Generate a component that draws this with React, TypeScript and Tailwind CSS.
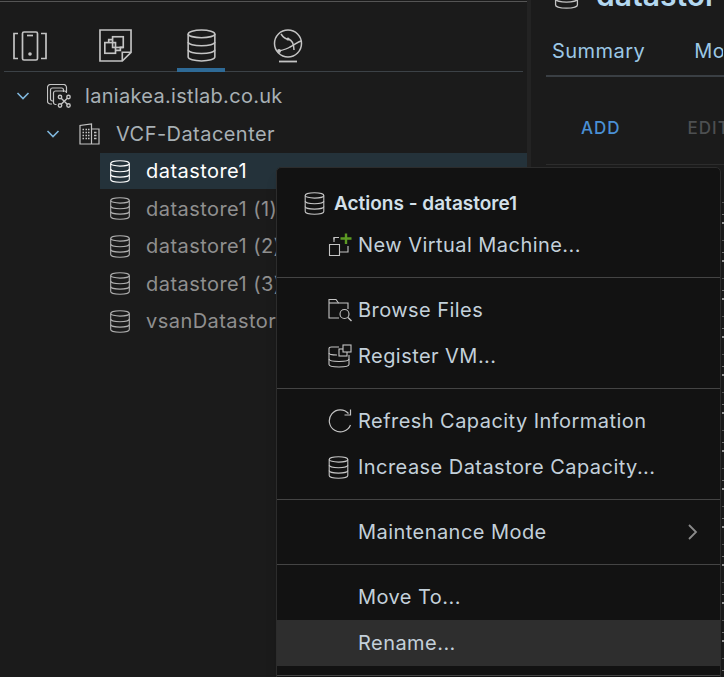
import type { ReactNode } from "react";

const ink = "#c4c4c4";

function Db({ className = "", color = ink }: { className?: string; color?: string }) {
  return (
    <svg viewBox="0 0 20 23" className={className} fill="none" stroke={color} strokeWidth="1.100">
      <ellipse cx="10" cy="3.400" rx="9.300" ry="2.700" />
      <path d="M0.700 3.400v16.200c0 1.500 4.200 2.700 9.300 2.700s9.300-1.200 9.300-2.700V3.400" />
      <path d="M0.700 9c0 1.500 4.200 2.700 9.300 2.700s9.300-1.200 9.300-2.700" />
      <path d="M0.700 14.400c0 1.500 4.200 2.700 9.300 2.700s9.300-1.200 9.300-2.700" />
    </svg>
  );
}

function HostsTabIcon() {
  return (
    <svg viewBox="0 0 34 30" className="h-[30px] w-[34px]" fill="none" stroke={ink} strokeWidth="1.700">
      <path d="M5 2.500H1v25h4M28 2.500h5v25h-5" />
      <rect x="9.500" y="1" width="15" height="28" rx="1.500" />
      <path d="M14 4.500h6" />
      <circle cx="17" cy="23" r="1.800" fill={ink} stroke="none" />
    </svg>
  );
}

function VmsTabIcon() {
  return (
    <svg viewBox="0 0 34 34" className="h-[33px] w-[33px]" fill="none" stroke={ink} strokeWidth="1.700">
      <path d="M1 1h32v23l-9 9H1z" />
      <path d="M33 24h-9v9" />
      <rect x="6" y="14" width="11" height="11" />
      <rect x="14" y="8" width="11" height="11" />
      <path d="M10 14V11h4M25 19h-3v3h-5" />
    </svg>
  );
}

function NetTabIcon() {
  return (
    <svg viewBox="0 0 30 34" className="h-[34px] w-[30px]" fill="none" stroke={ink} strokeWidth="1.500">
      <circle cx="15" cy="14.500" r="13.500" />
      <path d="M6 22c4-1 8-2 11-4 4-2 8-5 11-6" />
      <path d="M8 5c2 3 4 5 7 5 4 1 6 4 6 11" />
      <circle cx="6" cy="22" r="2" fill={ink} stroke="none" />
      <circle cx="15" cy="10" r="1.600" fill={ink} stroke="none" />
      <path d="M6 32.500h18" strokeWidth="1.800" />
    </svg>
  );
}

function VcenterIcon() {
  return (
    <svg viewBox="0 0 24 24" className="h-6 w-6" fill="none" stroke={ink} strokeWidth="1.200">
      <path d="M5 20H3.500a3 3 0 0 1-3-3V3.500a3 3 0 0 1 3-3h13a3 3 0 0 1 3 3V8" />
      <path d="M6 17H5.500a2 2 0 0 1-2-2V6a2 2 0 0 1 2-2h9a2 2 0 0 1 2 2v2" />
      <path d="M9.500 20.500H8.500a2 2 0 0 1-2-2V9a2 2 0 0 1 2-2h9a2 2 0 0 1 2 2" />
      <g strokeWidth="1.400">
        <circle cx="13" cy="13" r="1.700" />
        <circle cx="21.500" cy="13" r="1.700" />
        <circle cx="13" cy="21.500" r="1.700" />
        <circle cx="21.500" cy="21.500" r="1.700" />
        <path d="M14.200 14.200l6.100 6.100M20.300 14.200l-6.100 6.100" />
      </g>
    </svg>
  );
}

function DatacenterIcon() {
  return (
    <svg viewBox="0 0 21 22" className="h-[22px] w-[21px]" fill="none" stroke={ink} strokeWidth="1.200">
      <path d="M1 21V2.500L12.500 1v20zM12.500 6H20v15H1" />
      <path
        d="M3.500 6.500h1.500M6.500 6.500h1.500M9 6.500h1.500M3.500 9.500h1.500M6.500 9.500h1.500M9 9.500h1.500M3.500 12.500h1.500M6.500 12.500h1.500M9 12.500h1.500M3.500 15.500h1.500M6.500 15.500h1.500M9 15.500h1.500M15 9.500h2.500M15 12.500h2.500M15 15.500h2.500"
        strokeWidth="1.300"
      />
    </svg>
  );
}

function NewVmIcon() {
  return (
    <svg viewBox="0 0 24 24" className="h-6 w-6" fill="none" stroke={ink} strokeWidth="1.100">
      <path d="M6 9V4.500h5M1.500 11.500h10v11h-10z" />
      <path d="M6 4.500v2M11.500 19H20v-6" />
      <path d="M18 0.500v10.500M12.500 5.500h11" stroke="#5c9a23" strokeWidth="2.400" />
    </svg>
  );
}

function BrowseIcon() {
  return (
    <svg viewBox="0 0 24 24" className="h-6 w-6" fill="none" stroke={ink} strokeWidth="1.100">
      <path d="M11 20H1V1.500h7l2.500 3.500H20v6" />
      <path d="M1 5h9.500" />
      <circle cx="16.500" cy="16" r="4.500" />
      <path d="M20 19.500l3.500 3.500" strokeWidth="1.400" />
    </svg>
  );
}

function RegisterIcon() {
  return (
    <svg viewBox="0 0 24 24" className="h-6 w-6" fill="none" stroke={ink} strokeWidth="1.100">
      <path d="M11 3H3.500C2 3 1 3.500 1 4.500v16c0 1 2 2.500 10 2.500s10-1.500 10-2.500V11" />
      <path d="M1 9c0 1 3 2 8 2M1 15c0 1.500 4 2.500 10 2.500s10-1 10-2.500" />
      <rect x="11" y="5" width="8" height="7" />
      <rect x="15" y="1" width="8" height="7" fill="#121212" />
    </svg>
  );
}

function RefreshIcon() {
  return (
    <svg viewBox="0 0 24 24" className="h-6 w-6" fill="none" stroke={ink} strokeWidth="1.200">
      <path d="M20.500 4.500A11 11 0 1 0 22.500 16" />
      <path d="M22.500 0.500v5.500H16.500" />
    </svg>
  );
}

function MenuItem({ icon, label, hot }: { icon?: ReactNode; label: string; hot?: boolean }) {
  return (
    <div className={`flex h-[46px] items-center pl-[51px] ${hot ? "bg-[#2e2e2e]" : ""}`}>
      <div className="flex w-[30px] shrink-0">{icon}</div>
      <span className="text-[20px] leading-none tracking-[0.45px] text-[#c3d0da]">{label}</span>
    </div>
  );
}

function Sep() {
  return <div className="my-[9px] h-px bg-[#444444]" />;
}

const stores = ["datastore1 (1)", "datastore1 (2)", "datastore1 (3)", "vsanDatastore"];
const gridRows = Array.from({ length: 13 }, (_, i) => i);

export default function App() {
  return (
    <div className="relative flex h-[677px] w-[724px] overflow-hidden bg-[#1b1b1b] font-['Inter','Liberation_Sans',sans-serif] tracking-[0.45px]">
      {/* Navigator */}
      <div className="box-content h-full w-[527px] shrink-0 border-r-[4px] border-[#232323]">
        <div className="mt-px h-px w-[527px] bg-[#555555]" />
        <div className="mx-1 mt-[26px] flex h-[44px] border-b border-[#3c4247]">
          <div className="ml-[9px] pt-[3px]">
            <HostsTabIcon />
          </div>
          <div className="ml-[52px] pt-[1px]">
            <VmsTabIcon />
          </div>
          <div className="relative ml-[45px] flex w-[48px] justify-center pt-[1px]">
            <Db className="h-[33px] w-[29px]" />
            <div className="absolute bottom-[-1px] left-0 h-1 w-[48px] bg-[#2e6a96]" />
          </div>
          <div className="ml-[48px] pt-[1px]">
            <NetTabIcon />
          </div>
        </div>

        <div className="mt-[5px] flex h-[38px] items-center text-[20px] text-[#a8b0b5]">
          <svg viewBox="0 0 14 8" className="ml-[16px] h-2 w-[14px]" fill="none" stroke="#7fb6dc" strokeWidth="1.600">
            <path d="M1.500 1l5.500 5.500L12.500 1" />
          </svg>
          <div className="ml-[17px]">
            <VcenterIcon />
          </div>
          <span className="ml-[14px] tracking-[0.3px]">laniakea.istlab.co.uk</span>
        </div>
        <div className="flex h-[38px] items-center text-[20px] text-[#a8b0b5]">
          <svg viewBox="0 0 14 8" className="ml-[46px] h-2 w-[14px]" fill="none" stroke="#7fb6dc" strokeWidth="1.600">
            <path d="M1.500 1l5.500 5.500L12.500 1" />
          </svg>
          <div className="ml-[19px]">
            <DatacenterIcon />
          </div>
          <span className="ml-[16px]">VCF-Datacenter</span>
        </div>
        <div className="ml-[100px] flex h-9 items-center bg-[#24323a] text-[20px] text-white">
          <Db className="ml-[10px] h-[23px] w-[20px]" color="#ffffff" />
          <span className="ml-[16px]">datastore1</span>
        </div>
        <div className="mt-px">
          {stores.map((name) => (
            <div key={name} className="ml-[100px] flex h-[37.500px] items-center text-[20px] text-[#8f8f8f]">
              <Db className="ml-[10px] h-[23px] w-[20px] shrink-0" color="#b0b0b0" />
              <span className="ml-[16px] whitespace-nowrap">{name}</span>
            </div>
          ))}
        </div>
      </div>

      {/* Datastore details */}
      <div className="min-w-0 flex-1 pl-[15px] tracking-normal">
        <div className="-mt-[20px] flex h-[30px] items-center overflow-hidden pl-[8px]">
          <Db className="h-[27px] w-[25px] shrink-0" />
          <span className="ml-[17px] text-[30px] leading-none font-semibold whitespace-nowrap text-[#b4d8f0]">datastor</span>
        </div>
        <div className="mt-[21px] flex h-[46px] gap-[49px] overflow-hidden border-b-2 border-[#3a3f44] pl-[6px] text-[20px] leading-[40px] tracking-[0.45px] text-[#9cc8e6]">
          <span>Summary</span>
          <span className="w-[29px] shrink-0 overflow-hidden">Mo</span>
        </div>
        <div className="flex h-[88px] items-center gap-[67px] border-b border-[#2c2c2c] pt-[16px] pl-[35px] text-[17px] font-medium tracking-[1px] text-[#4a90d4]">
          <span>ADD</span>
          <span className="text-[#4d4f51]">EDIT</span>
        </div>
      </div>

      {/* Table rows showing past the menu */}
      <div className="absolute top-[202px] right-0 flex w-[2px] flex-col">
        {gridRows.map((row) => (
          <div key={row} className="relative h-[38px] shrink-0">
            <div className="h-px bg-[#5a5a5a]" />
            <div className="mt-[11px] h-px bg-[#777777]" />
            <div className="mt-[7px] h-[2px] bg-[#9a9a9a]" />
          </div>
        ))}
      </div>

      {/* Context menu */}
      <div className="absolute top-[167px] left-[276px] h-[520px] w-[445px] rounded-t-[5px] border border-[#2c2c2c] bg-[#121212] shadow-lg">
        <div className="flex h-[46px] items-center pt-[24px]">
          <Db className="ml-[27px] h-[23px] w-[21px]" />
          <span className="ml-[9px] text-[19px] leading-none font-semibold tracking-normal text-[#d3e0ea]">Actions - datastore1</span>
        </div>
        <div className="mt-[8px]">
          <MenuItem icon={<NewVmIcon />} label="New Virtual Machine..." />
        </div>
        <Sep />
        <MenuItem icon={<BrowseIcon />} label="Browse Files" />
        <MenuItem icon={<RegisterIcon />} label="Register VM..." />
        <Sep />
        <MenuItem icon={<RefreshIcon />} label="Refresh Capacity Information" />
        <MenuItem icon={<Db className="h-[23px] w-[21px]" />} label="Increase Datastore Capacity..." />
        <Sep />
        <div className="relative">
          <MenuItem label="Maintenance Mode" />
          <svg viewBox="0 0 10 16" className="absolute top-[15px] right-[22px] h-4 w-[10px]" fill="none" stroke="#8a8a8a" strokeWidth="1.800">
            <path d="M1 1l7 7-7 7" />
          </svg>
        </div>
        <Sep />
        <MenuItem label="Move To..." />
        <MenuItem label="Rename..." hot />
        <Sep />
      </div>
    </div>
  );
}
